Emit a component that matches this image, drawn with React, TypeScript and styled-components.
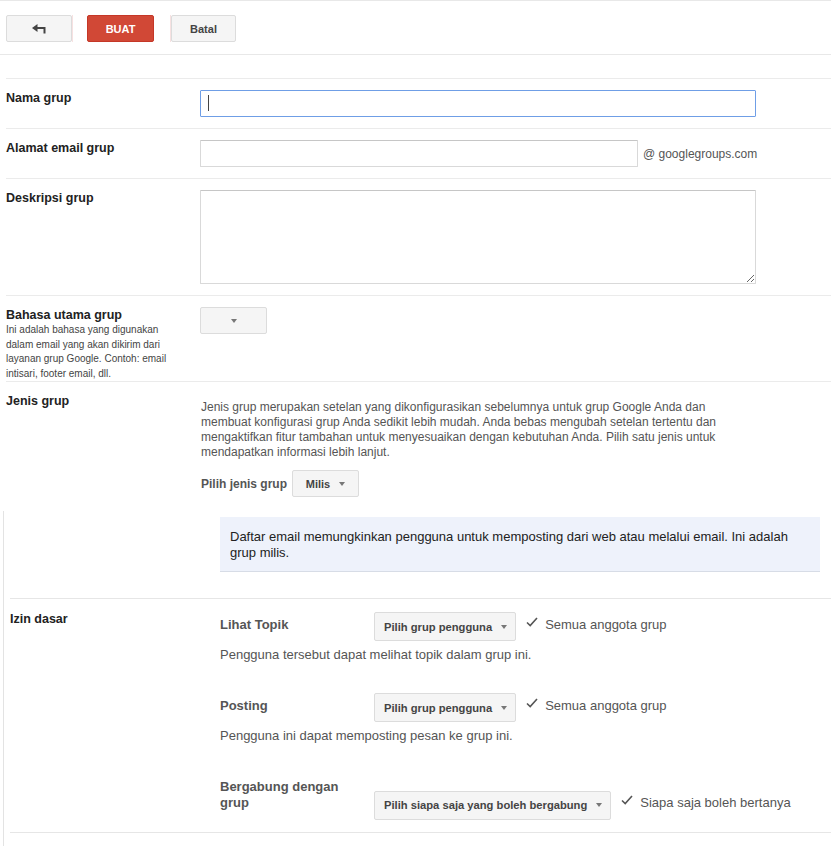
import styled, { createGlobalStyle } from "styled-components";

const GlobalStyle = createGlobalStyle`
  html, body { margin: 0; padding: 0; background: #fff; }
  body { font-family: Arial, "Liberation Sans", Helvetica, sans-serif; color: #222; }
  * { box-sizing: border-box; }
`;

const Page = styled.div`
  width: 831px;
  min-height: 846px;
  background: #fff;
`;

const Toolbar = styled.div`
  height: 55px;
  border-top: 1px solid #e8e8e8;
  border-bottom: 1px solid #e8e8e8;
  display: flex;
  align-items: flex-start;
  padding: 14px 0 0 6px;
`;

const ToolButton = styled.button<{ $primary?: boolean; $w: number }>`
  width: ${(p) => p.$w}px;
  height: 27px;
  display: flex;
  align-items: center;
  justify-content: center;
  padding: 0;
  border-radius: 2px;
  font-family: inherit;
  font-size: 11px;
  font-weight: bold;
  cursor: pointer;
  color: ${(p) => (p.$primary ? "#fff" : "#444")};
  background: ${(p) => (p.$primary ? "#d14836" : "#f5f5f5")};
  border: 1px solid ${(p) => (p.$primary ? "#c53727" : "#dcdcdc")};
`;

const PrimarySlot = styled.div`
  display: flex;
  width: 99px;
  height: 27px;
  padding-left: 14px;
  border-left: 1px solid #f7e1e1;
  border-right: 1px solid #f7e1e1;
`;

const Form = styled.div`
  margin: 23px 0 0 6px;
  border-top: 1px solid #ebebeb;
`;

const Row = styled.div<{ $pb?: number; $noBorder?: boolean }>`
  display: grid;
  grid-template-columns: 194px 1fr;
  padding: 11px 0 ${(p) => p.$pb ?? 11}px;
  border-bottom: ${(p) => (p.$noBorder ? "none" : "1px solid #ebebeb")};
`;

const Label = styled.div`
  font-size: 12.5px;
  font-weight: bold;
  line-height: 16px;
  color: #222;
`;

const LabelHint = styled.div`
  max-width: 170px;
  font-size: 10px;
  line-height: 14.5px;
  color: #444;
`;

const Field = styled.div`
  display: flex;
  align-items: center;
`;

const InputWrap = styled.div`
  position: relative;
`;

const TextInput = styled.input<{ $w: number; $focused?: boolean }>`
  display: block;
  width: ${(p) => p.$w}px;
  height: 27px;
  margin: 0;
  padding: 0 8px;
  font-family: inherit;
  font-size: 13px;
  border: 1px solid ${(p) => (p.$focused ? "#6f9ee6" : "#d9d9d9")};
  border-top-color: ${(p) => (p.$focused ? "#6f9ee6" : "#c6c6c6")};
  border-radius: 1px;
  outline: none;
  background: #fff;
`;

const Caret = styled.span`
  position: absolute;
  left: 8px;
  top: 5px;
  width: 1px;
  height: 16px;
  background: #444;
`;

const Suffix = styled.span`
  margin-left: 5px;
  font-size: 12px;
  color: #555;
`;

const TextArea = styled.textarea`
  display: block;
  width: 556px;
  height: 94px;
  margin: 0;
  padding: 6px 8px;
  font-family: inherit;
  font-size: 13px;
  border: 1px solid #d9d9d9;
  border-top-color: #c6c6c6;
  border-radius: 1px;
  outline: none;
`;

const DropButton = styled.button<{ $w?: number; $h?: number; $center?: boolean }>`
  display: inline-flex;
  align-items: center;
  justify-content: ${(p) => (p.$center ? "center" : "flex-start")};
  width: ${(p) => (p.$w ? `${p.$w}px` : "auto")};
  height: ${(p) => p.$h ?? 27}px;
  padding: ${(p) => (p.$center ? "0" : "0 8px 0 9px")};
  font-family: inherit;
  font-size: ${(p) => (p.$center ? 11 : 11.2)}px;
  font-weight: bold;
  color: #444;
  background: #f5f5f5;
  border: 1px solid #dcdcdc;
  border-radius: 2px;
  cursor: pointer;
  white-space: nowrap;
`;

const Arrow = styled.span<{ $gap?: number }>`
  display: inline-block;
  width: 0;
  height: 0;
  margin-left: ${(p) => p.$gap ?? 9}px;
  border-left: 3.5px solid transparent;
  border-right: 3.5px solid transparent;
  border-top: 4px solid #777;
`;

const TypeBody = styled.div`
  padding-left: 1px;
`;

const TypeText = styled.p`
  width: 530px;
  margin: 7px 0 0;
  font-size: 12px;
  line-height: 15px;
  color: #555;
`;

const PickRow = styled.div`
  display: flex;
  align-items: center;
  gap: 5px;
  margin-top: 10px;
`;

const PickLabel = styled.span`
  font-size: 12px;
  font-weight: bold;
  color: #555;
`;

const TypePanel = styled.div`
  margin-left: 3px;
  border-left: 1px solid #e3e3e3;
  padding: 6px 0 15px 6px;
`;

const InfoBox = styled.div`
  margin-left: 210px;
  width: 600px;
  padding: 12px 10px 10px;
  background: #eef2fb;
  border-bottom: 1px solid #d7dce6;
  font-size: 13px;
  line-height: 16px;
  color: #222;
`;

const PermSection = styled.div`
  display: grid;
  grid-template-columns: 210px 1fr;
  margin-top: 26px;
  padding: 13px 0 12px;
  border-top: 1px solid #e6e6e6;
  border-bottom: 1px solid #e6e6e6;
`;

const SectionLabel = styled(Label)`
  margin-top: -1px;
`;

const PermItem = styled.div<{ $mt: number }>`
  display: flex;
  align-items: last baseline;
  margin-top: ${(p) => p.$mt}px;
`;

const PermLabel = styled.div`
  width: 140px;
  margin-right: 14px;
  padding-top: 2px;
  font-size: 13px;
  font-weight: bold;
  line-height: 16px;
  color: #555;
`;

const Granted = styled.span`
  display: inline-flex;
  align-items: baseline;
  margin-left: 10px;
  font-size: 13px;
  color: #555;
  svg {
    margin-right: 7px;
    position: relative;
    top: -2px;
  }
`;

const PermHint = styled.div`
  margin-top: 6px;
  font-size: 13px;
  line-height: 16px;
  color: #555;
`;

const BackIcon = () => (
  <svg width="14" height="10" viewBox="0 0 14 10">
    <path d="M12.5 9.5 V4 H5" stroke="#444" strokeWidth="2" fill="none" />
    <path d="M0 4 L5.5 0 V8 Z" fill="#444" />
  </svg>
);

const Check = () => (
  <svg width="12" height="10" viewBox="0 0 12 10">
    <path d="M1 5.5 L4.2 8.5 L11 1" stroke="#555" strokeWidth="1.6" fill="none" />
  </svg>
);

const perms = [
  {
    label: "Lihat Topik",
    button: "Pilih grup pengguna",
    value: "Semua anggota grup",
    hint: "Pengguna tersebut dapat melihat topik dalam grup ini.",
    mt: 0,
  },
  {
    label: "Posting",
    button: "Pilih grup pengguna",
    value: "Semua anggota grup",
    hint: "Pengguna ini dapat memposting pesan ke grup ini.",
    mt: 30,
  },
  {
    label: "Bergabung dengan grup",
    button: "Pilih siapa saja yang boleh bergabung",
    value: "Siapa saja boleh bertanya",
    mt: 33,
  },
];

export default function App() {
  return (
    <Page>
      <GlobalStyle />
      <Toolbar>
        <ToolButton $w={66} aria-label="Kembali">
          <BackIcon />
        </ToolButton>
        <PrimarySlot>
          <ToolButton $primary $w={67}>
            BUAT
          </ToolButton>
        </PrimarySlot>
        <ToolButton $w={65}>Batal</ToolButton>
      </Toolbar>

      <Form>
        <Row>
          <Label>Nama grup</Label>
          <InputWrap>
            <TextInput $w={556} $focused />
            <Caret />
          </InputWrap>
        </Row>
        <Row>
          <Label>Alamat email grup</Label>
          <Field>
            <TextInput $w={438} />
            <Suffix>@ googlegroups.com</Suffix>
          </Field>
        </Row>
        <Row>
          <Label>Deskripsi grup</Label>
          <div>
            <TextArea />
          </div>
        </Row>
        <Row $pb={0}>
          <div>
            <Label>Bahasa utama grup</Label>
            <LabelHint>
              Ini adalah bahasa yang digunakan dalam email yang akan dikirim dari layanan grup Google.
              Contoh: email intisari, footer email, dll.
            </LabelHint>
          </div>
          <div>
            <DropButton $w={67} $center>
              <Arrow $gap={0} />
            </DropButton>
          </div>
        </Row>
        <Row $pb={14} $noBorder>
          <Label>Jenis grup</Label>
          <TypeBody>
            <TypeText>
              Jenis grup merupakan setelan yang dikonfigurasikan sebelumnya untuk grup Google Anda dan
              membuat konfigurasi grup Anda sedikit lebih mudah. Anda bebas mengubah setelan tertentu dan
              mengaktifkan fitur tambahan untuk menyesuaikan dengan kebutuhan Anda. Pilih satu jenis untuk
              mendapatkan informasi lebih lanjut.
            </TypeText>
            <PickRow>
              <PickLabel>Pilih jenis grup</PickLabel>
              <DropButton $w={67} $center>
                Milis
                <Arrow $gap={9} />
              </DropButton>
            </PickRow>
          </TypeBody>
        </Row>
      </Form>

      <TypePanel>
        <InfoBox>
          Daftar email memungkinkan pengguna untuk memposting dari web atau melalui email. Ini adalah
          grup milis.
        </InfoBox>
        <PermSection>
          <SectionLabel>Izin dasar</SectionLabel>
          <div>
            {perms.map((p) => (
              <div key={p.label}>
                <PermItem $mt={p.mt}>
                  <PermLabel>{p.label}</PermLabel>
                  <DropButton $h={29}>
                    {p.button}
                    <Arrow />
                  </DropButton>
                  <Granted>
                    <Check />
                    {p.value}
                  </Granted>
                </PermItem>
                {p.hint && <PermHint>{p.hint}</PermHint>}
              </div>
            ))}
          </div>
        </PermSection>
      </TypePanel>
    </Page>
  );
}
